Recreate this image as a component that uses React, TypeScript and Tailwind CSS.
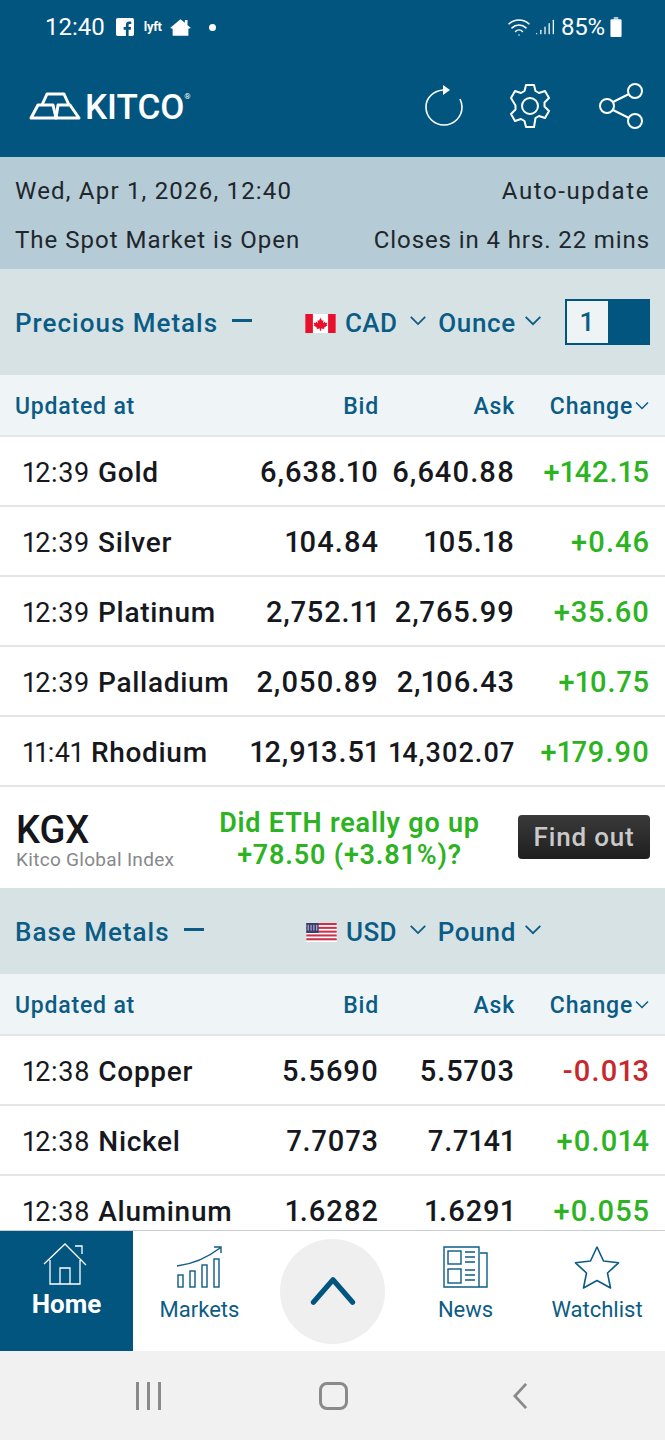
import { Signal, Wifi } from "lucide-react";

type Row = { time: string; name: string; bid: string; ask: string; change: string; down?: boolean };

const precious: Row[] = [
  { time: "12:39", name: "Gold", bid: "6,638.10", ask: "6,640.88", change: "+142.15" },
  { time: "12:39", name: "Silver", bid: "104.84", ask: "105.18", change: "+0.46" },
  { time: "12:39", name: "Platinum", bid: "2,752.11", ask: "2,765.99", change: "+35.60" },
  { time: "12:39", name: "Palladium", bid: "2,050.89", ask: "2,106.43", change: "+10.75" },
  { time: "11:41", name: "Rhodium", bid: "12,913.51", ask: "14,302.07", change: "+179.90" },
];

const base: Row[] = [
  { time: "12:38", name: "Copper", bid: "5.5690", ask: "5.5703", change: "-0.013", down: true },
  { time: "12:38", name: "Nickel", bid: "7.7073", ask: "7.7141", change: "+0.014" },
  { time: "12:38", name: "Aluminum", bid: "1.6282", ask: "1.6291", change: "+0.055" },
];

function Chevron({ className }: { className: string }) {
  return (
    <svg viewBox="0 0 20 12" className={className} fill="none" stroke="currentColor" strokeWidth="2">
      <path d="M2 2l8 8 8-8" />
    </svg>
  );
}

function TableHead() {
  return (
    <div className="flex h-[62px] shrink-0 items-center border-b-2 border-[#e3e6e8] bg-[#eff4f7] px-[15px] pt-[4px] text-[23px] font-medium tracking-[0.8px] text-[#0b5c85]">
      <div className="flex-1">Updated at</div>
      <div className="w-[100px] text-right">Bid</div>
      <div className="w-[136px] text-right">Ask</div>
      <div className="flex w-[135px] items-center justify-end">
        Change
        <Chevron className="mb-[4px] ml-[1px] h-[9px] w-[16px]" />
      </div>
    </div>
  );
}

function PriceRow({ row }: { row: Row }) {
  return (
    <div className="flex h-[70px] shrink-0 items-center border-b-2 border-[#e3e5e6] bg-white pl-[23px] pr-[15px] pt-[4px] text-[29px] font-medium tracking-[0.9px] text-[#16181d] proportional-nums">
      <div className="flex min-w-0 flex-1 items-center whitespace-nowrap">
        <span className="mr-[8px] text-[27px] font-normal tracking-[0.6px]">{row.time}</span>
        <span className="text-[28px] tracking-[0.7px]">{row.name}</span>
      </div>
      <div className="flex w-[100px] justify-end whitespace-nowrap">{row.bid}</div>
      <div className={`w-[136px] whitespace-nowrap text-right ${row.ask.length > 8 ? "text-[27px]" : ""}`}>{row.ask}</div>
      <div className={`w-[135px] text-right ${row.down ? "text-[#c8282d]" : "text-[#2cb322]"}`}>{row.change}</div>
    </div>
  );
}

function Flag({ kind }: { kind: "ca" | "us" }) {
  if (kind === "ca") {
    return (
      <svg viewBox="0 0 32 20" className="h-[19px] w-[33px]">
        <rect width="32" height="20" fill="#fff" />
        <rect width="8" height="20" fill="#e8112d" />
        <rect x="24" width="8" height="20" fill="#e8112d" />
        <path d="M16 4l1.600 3 1.600-.8-.6 3.600 2-1.800.6 1.400 2-.3-.7 2.200.8.500-3.600 2.700.4 1.200-3.400-.4v2.400h-1.400v-2.400l-3.400.4.4-1.200-3.600-2.700.8-.5-.7-2.200 2 .3.6-1.400 2 1.800-.6-3.600 1.600.8z" fill="#e8112d" />
      </svg>
    );
  }
  return (
    <svg viewBox="0 0 32 20" className="h-[19px] w-[33px]">
      <rect width="32" height="20" fill="#fff" />
      {[0, 4, 8, 12, 16].map((y) => (
        <rect key={y} y={y} width="32" height="2.2" fill="#c8324a" />
      ))}
      <rect width="13" height="10.5" fill="#3c3b6e" />
      <path d="M2 2v6M5 2v6M8 2v6M11 2v6" stroke="#c9cde6" strokeWidth="1" />
    </svg>
  );
}

function SectionHead({ title, flag, currency, unit, toggle }: { title: string; flag: "ca" | "us"; currency: string; unit: string; toggle?: boolean }) {
  return (
    <div className={`flex shrink-0 items-center bg-[#d7e2e5] px-[15px] pt-[3px] text-[26px] font-medium tracking-[1px] text-[#0b5c85] ${toggle ? "h-[106px]" : "h-[86px]"}`}>
      <span>{title}</span>
      <span className="mb-[6px] ml-[14px] h-[3px] w-[20px] bg-[#0b5c85]" />
      <div className="ml-auto flex items-center">
        <Flag kind={flag} />
        <span className="ml-[8px] tracking-[0.3px]">{currency}</span>
        <Chevron className="mb-[6px] ml-[12px] h-[11px] w-[18px]" />
        <span className="ml-[11px] tracking-[0.7px]">{unit}</span>
        <Chevron className="mb-[6px] ml-[7px] h-[11px] w-[20px]" />
        {toggle ? (
          <div className="mb-[3px] ml-[22px] flex h-[46px] w-[85px] border-2 border-[#02557f]">
            <div className="flex w-[41px] items-center justify-center bg-[#eef3f6] text-[26px] font-medium">1</div>
            <div className="flex-1 bg-[#02557f]" />
          </div>
        ) : (
          <div className="w-[107px]" />
        )}
      </div>
    </div>
  );
}

export default function App() {
  return (
    <div className="flex h-[1440px] w-[665px] flex-col overflow-hidden bg-white font-['Roboto',sans-serif]">
      <header className="h-[157px] shrink-0 bg-[#02557f] px-[15px] text-white">
        <div className="flex h-[54px] items-center pl-[30px] pr-[28px] text-[24px]">
          <span>12:40</span>
          <svg viewBox="0 0 20 20" className="ml-[11px] h-[18px] w-[18px]">
            <rect width="20" height="20" rx="2" fill="#fff" />
            <path d="M14 20v-7h2.400l.4-3H14V8.200c0-.9.300-1.400 1.500-1.400H17V4.100C16.700 4 15.800 4 14.800 4 12.600 4 11 5.300 11 7.800V10H8.500v3H11v7z" fill="#02557f" />
          </svg>
          <span className="ml-[10px] text-[13px] font-bold tracking-[-0.3px]">lyft</span>
          <svg viewBox="0 0 24 20" className="ml-[8px] h-[20px] w-[21px]" fill="#fff">
            <path d="M12 1l5 4V2h3v6l4 3-3 1v8H3v-8l-3-1z" />
          </svg>
          <span className="ml-[18px] h-[7px] w-[7px] rounded-full bg-white" />
          <div className="ml-auto flex items-center">
            <Wifi className="h-[24px] w-[26px]" strokeWidth={1.5} />
            <Signal className="ml-[3px] h-[20px] w-[20px]" strokeWidth={1.5} />
            <span className="ml-[6px] mr-[5px] text-[24px] font-normal tracking-[-0.2px]">85%</span>
            <svg viewBox="0 0 10 18" className="h-[20px] w-[12px]" fill="#fff">
              <rect x="3" width="4" height="2" opacity="0.7" />
              <rect y="2" width="10" height="16" rx="1" />
            </svg>
          </div>
        </div>
        <div className="flex h-[103px] items-center">
          <div className="ml-[14px] flex items-center">
            <svg viewBox="0 0 52 28" className="h-[28px] w-[52px]" fill="none" stroke="#fff" strokeWidth="3" strokeLinejoin="round">
              <path d="M13 13l5-11h17l5 11" />
              <path d="M9 13h15l3 13H2z" />
              <path d="M29 13h12l9 13H27z" />
            </svg>
            <span className="ml-[4px] pt-[3px] text-[35px] font-medium leading-none tracking-[0px]">KITCO</span>
            <span className="mb-[18px] text-[8px]">®</span>
          </div>
          <div className="ml-auto flex items-center pr-[6px]">
            <svg viewBox="0 0 40 42" className="h-[42px] w-[40px]" fill="none" stroke="#fff" strokeWidth="1.6">
              <path d="M19 5C9 6 2 13 2 22c0 10 8 18 18 18s18-8 18-18c0-3-.8-5.500-2-8" />
              <path d="M19 0l7 5-7 5z" fill="#fff" stroke="none" />
            </svg>
            <svg viewBox="0 0 44 46" className="ml-[44px] h-[46px] w-[44px]" fill="none" stroke="#fff" strokeWidth="2" strokeLinejoin="round">
              <path d="M18 2h8l1.500 6 3.500 2 6-2 4 7-4.500 4.500v4L41 28l-4 7-6-2-3.500 2L26 44h-8l-1.500-6-3.500-2-6 2-4-7 4.500-4.500v-4L3 15l4-7 6 2 3.500-2z" />
              <circle cx="22" cy="23" r="8" />
            </svg>
            <svg viewBox="0 0 46 46" className="ml-[46px] h-[46px] w-[46px]" fill="none" stroke="#fff" strokeWidth="2">
              <circle cx="9" cy="23" r="7" />
              <circle cx="37" cy="8" r="7" />
              <circle cx="37" cy="38" r="7" />
              <path d="M15 19l16-8M15 27l16 8" />
            </svg>
          </div>
        </div>
      </header>

      <div className="flex h-[112px] shrink-0 flex-col justify-center gap-[21px] bg-[#b5cbd6] px-[15px] pt-[4px] text-[24px] leading-[28px] tracking-[1px] text-[#20262b]">
        <div className="flex justify-between">
          <span className="tracking-[1.2px]">Wed, Apr 1, 2026, 12:40</span>
          <span className="tracking-[1.6px]">Auto-update</span>
        </div>
        <div className="flex justify-between">
          <span>The Spot Market is Open</span>
          <span className="tracking-[0.9px]">Closes in 4 hrs. 22 mins</span>
        </div>
      </div>

      <div className="flex min-h-0 flex-1 flex-col overflow-hidden">
        <SectionHead title="Precious Metals" flag="ca" currency="CAD" unit="Ounce" toggle />
        <TableHead />
        {precious.map((row) => (
          <PriceRow key={row.name} row={row} />
        ))}
        <div className="flex h-[101px] shrink-0 items-center bg-white px-[15px]">
          <div className="w-[180px] pt-[8px]">
            <div className="pl-[1px] text-[38px] font-medium leading-[36px] text-[#14161c]">KGX</div>
            <div className="pl-[1px] text-[19px] leading-[24px] tracking-[0.3px] text-[#85888c]">Kitco Global Index</div>
          </div>
          <div className="flex-1 pr-[14px] pt-[3px] text-center text-[27px] font-semibold leading-[32px] tracking-[0.8px] text-[#2cb322]">
            <div>Did ETH really go up</div>
            <div>+78.50 (+3.81%)?</div>
          </div>
          <div className="mb-[1px] flex h-[44px] w-[132px] items-center justify-center rounded-[4px] bg-gradient-to-b from-[#3a3a3a] to-[#1f1f1f] text-[26px] font-medium tracking-[0.8px] text-[#c9c9c9]">Find out</div>
        </div>
        <SectionHead title="Base Metals" flag="us" currency="USD" unit="Pound" />
        <TableHead />
        {base.map((row) => (
          <PriceRow key={row.name} row={row} />
        ))}
      </div>

      <nav className="flex h-[121px] shrink-0 border-t-[1px] border-[#c9ccd0] bg-white text-[#0b5c85]">
        <div className="flex w-[133px] flex-col items-center bg-[#02557f] pt-[12px] text-white">
          <svg viewBox="0 0 44 42" className="mr-[3px] h-[42px] w-[44px]" fill="none" stroke="#fff" strokeWidth="1.3">
            <path d="M1 21L22 1l21 21M7 17v24h30V17M17 41V25h10v16M32 3h7v8" />
          </svg>
          <span className="mt-[4px] text-[26px] font-bold leading-[30px]">Home</span>
        </div>
        <div className="flex w-[133px] flex-col items-center pt-[15px]">
          <svg viewBox="0 0 46 42" className="h-[42px] w-[46px]" fill="none" stroke="#0b5c85" strokeWidth="1.4">
            <path d="M0 20c16-2 30-8 43-18M37 1h7v6" />
            <rect x="1" y="29" width="5" height="12" />
            <rect x="13" y="25" width="5" height="16" />
            <rect x="25" y="19" width="5" height="22" />
            <rect x="37" y="13" width="5" height="28" />
          </svg>
          <span className="mt-[9px] text-[22px] leading-[26px]">Markets</span>
        </div>
        <div className="flex w-[133px] items-center justify-center">
          <div className="flex h-[105px] w-[105px] items-center justify-center rounded-full bg-[#efefef]">
            <svg viewBox="0 0 48 30" className="h-[28px] w-[46px]" fill="none" stroke="#02557f" strokeWidth="5.500" strokeLinecap="round" strokeLinejoin="round">
              <path d="M3 27L24 3l21 24" />
            </svg>
          </div>
        </div>
        <div className="flex w-[133px] flex-col items-center pt-[15px]">
          <svg viewBox="0 0 46 42" className="h-[42px] w-[46px]" fill="none" stroke="#0b5c85" strokeWidth="1.4">
            <path d="M37 7h7v34H36M1 1h35v40H1z" />
            <rect x="5" y="5" width="13" height="13" />
            <rect x="5" y="23" width="13" height="14" />
            <path d="M22 6h10M22 11h10M22 16h10M22 24h10M22 29h10M22 34h10" />
          </svg>
          <span className="mt-[9px] text-[22px] leading-[26px]">News</span>
        </div>
        <div className="flex w-[133px] flex-col items-center pt-[14px]">
          <svg viewBox="0 0 46 46" className="mr-[3px] h-[46px] w-[46px]" fill="none" stroke="#0b5c85" strokeWidth="1.6" strokeLinejoin="round">
            <path d="M23 2l6.500 14 15 1.800-11 10.200 3 15L23 35.500 9.500 43l3-15-11-10.200 15-1.800z" />
          </svg>
          <span className="mr-[3px] mt-[6px] text-[22px] leading-[26px]">Watchlist</span>
        </div>
      </nav>

      <div className="flex h-[89px] shrink-0 items-center bg-[#f1f1f1] text-[#8a8a8a]">
        <div className="flex w-[296px] justify-center gap-[8px]">
          <span className="h-[28px] w-[3px] bg-[#8a8a8a]" />
          <span className="h-[28px] w-[3px] bg-[#8a8a8a]" />
          <span className="h-[28px] w-[3px] bg-[#8a8a8a]" />
        </div>
        <div className="ml-[23px] h-[28px] w-[29px] rounded-[8px] border-[3px] border-[#8a8a8a]" />
        <svg viewBox="0 0 18 30" className="ml-[164px] h-[28px] w-[17px]" fill="none" stroke="#8a8a8a" strokeWidth="3">
          <path d="M15 2L3 15l12 13" />
        </svg>
      </div>
    </div>
  );
}
